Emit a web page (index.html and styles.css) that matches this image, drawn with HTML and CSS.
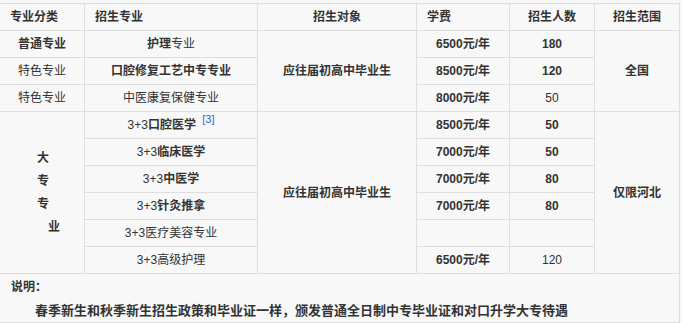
FILE: index.html
```html
<!DOCTYPE html>
<html lang="zh-CN">
<head>
<meta charset="utf-8">
<title>招生计划</title>
<link rel="stylesheet" href="styles.css">
</head>
<body>
<table class="plan">
  <colgroup>
    <col class="c1"><col class="c2"><col class="c3"><col class="c4"><col class="c5"><col class="c6">
  </colgroup>
  <tr class="head">
    <td class="left">专业分类</td>
    <td class="left">招生专业</td>
    <td>招生对象</td>
    <td class="left">学费</td>
    <td>招生人数</td>
    <td>招生范围</td>
  </tr>
  <tr>
    <td class="b">普通专业</td>
    <td><b>护理</b>专业</td>
    <td rowspan="3" class="b">应往届初高中毕业生</td>
    <td class="b">6500元/年</td>
    <td class="b">180</td>
    <td rowspan="3" class="b">全国</td>
  </tr>
  <tr>
    <td>特色专业</td>
    <td class="b">口腔修复工艺中专专业</td>
    <td class="b">8500元/年</td>
    <td class="b">120</td>
  </tr>
  <tr>
    <td>特色专业</td>
    <td>中医康复保健专业</td>
    <td class="b">8000元/年</td>
    <td>50</td>
  </tr>
  <tr>
    <td rowspan="6" class="b vert">大<br>专<br>专<br><span class="indent">业</span></td>
    <td>3+3<b>口腔医学</b> <sup class="ref">[3]</sup></td>
    <td rowspan="6" class="b">应往届初高中毕业生</td>
    <td class="b">8500元/年</td>
    <td class="b">50</td>
    <td rowspan="6" class="b">仅限河北</td>
  </tr>
  <tr>
    <td>3+3<b>临床医学</b></td>
    <td class="b">7000元/年</td>
    <td class="b">50</td>
  </tr>
  <tr>
    <td>3+3<b>中医学</b></td>
    <td class="b">7000元/年</td>
    <td class="b">80</td>
  </tr>
  <tr>
    <td>3+3<b>针灸推拿</b></td>
    <td class="b">7000元/年</td>
    <td class="b">80</td>
  </tr>
  <tr>
    <td>3+3医疗美容专业</td>
    <td></td>
    <td></td>
  </tr>
  <tr>
    <td>3+3高级护理</td>
    <td class="b">6500元/年</td>
    <td>120</td>
  </tr>
  <tr>
    <td colspan="6" class="note">
      <div class="note-title">说明：</div>
      <div class="note-text">春季新生和秋季新生招生政策和毕业证一样，颁发普通全日制中专毕业证和对口升学大专待遇</div>
    </td>
  </tr>
</table>
</body>
</html>
```

FILE: styles.css
```css
html, body {
  margin: 0;
  padding: 0;
  background: #f8f8f8;
}
body {
  font-family: "Liberation Sans", "Noto Sans CJK SC", sans-serif;
  font-size: 12px;
  color: #333;
}
.plan {
  margin: 3px 0 0 -1px;
  border-collapse: collapse;
  table-layout: fixed;
  width: 681px;
  background: #f8f8f8;
}
.c1 { width: 85px; }
.c2 { width: 173px; }
.c3 { width: 159px; }
.c4 { width: 93px; }
.c5 { width: 85px; }
.c6 { width: 85px; }
.plan td {
  border: 1px solid #dedede;
  padding: 0 10px;
  line-height: 26px;
  text-align: center;
  vertical-align: middle;
  white-space: nowrap;
}
.plan b, .plan .b {
  font-weight: bold;
}
.head td {
  font-weight: bold;
}
.plan td.left {
  text-align: left;
}
.plan td.vert {
  line-height: 23px;
  text-align: left;
  padding-left: 37px;
}
.indent {
  padding-left: 11px;
}
.ref {
  color: #3366cc;
  font-size: 11px;
  line-height: 0;
  vertical-align: 6px;
  font-weight: normal;
  margin-left: 3px;
}
.plan td.note {
  text-align: left;
  line-height: 23px;
  padding: 2px 10px 0 11px;
  font-weight: bold;
}
.note-text {
  padding-left: 24px;
  font-size: 13px;
}
```
